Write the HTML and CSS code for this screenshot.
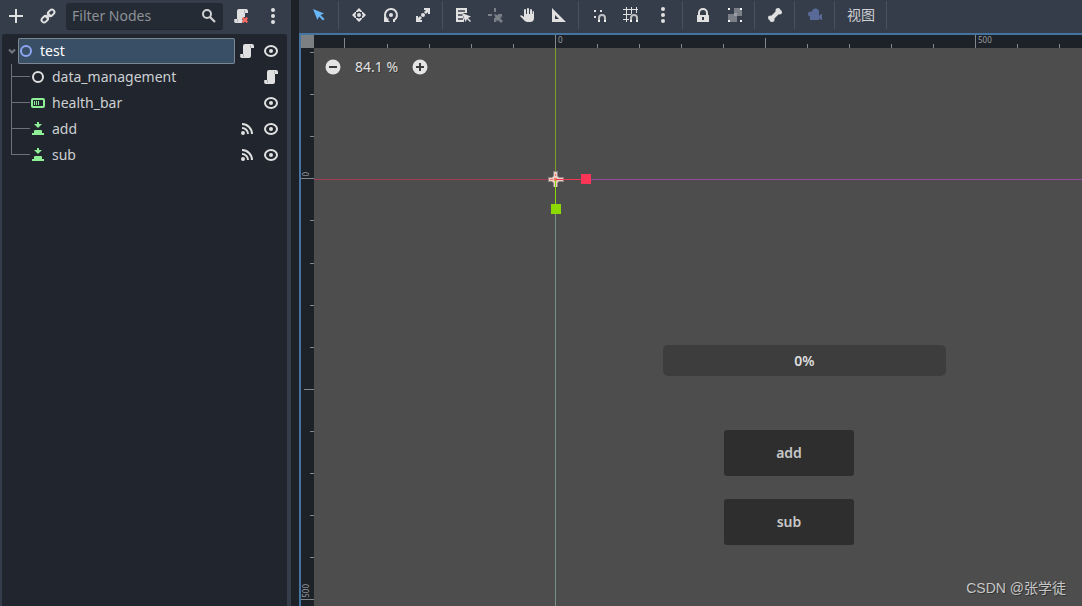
FILE: index.html
```
<!DOCTYPE html>
<html lang="en">
<head>
<meta charset="utf-8">
<title>Scene editor</title>
<link rel="stylesheet" href="styles.css">
</head>
<body>
<svg class="defs" aria-hidden="true">
  <symbol id="script" viewBox="0 0 16 16"><path fill="#e0e0e0" d="M6 1h7a2 2 0 0 1 2 2v2h-3v8a2 2 0 0 1-2 2H3a2 2 0 0 1-2-2v-2h3V3a2 2 0 0 1 2-2z"/><path fill="none" stroke="#b0b2b5" d="M11.500 2v3M1.500 11v2M4.500 11v3"/></symbol>
  <symbol id="eye" viewBox="0 0 16 16"><ellipse cx="8" cy="8" rx="6" ry="5" fill="none" stroke="#e0e0e0" stroke-width="2"/><circle cx="8" cy="8" r="2" fill="#e0e0e0"/></symbol>
  <symbol id="signal" viewBox="0 0 16 16"><circle cx="4" cy="12" r="2" fill="#e0e0e0"/><path d="M3 7a6 6 0 0 1 6 6M3 3a10 10 0 0 1 10 10" fill="none" stroke="#e0e0e0" stroke-width="2"/></symbol>
  <symbol id="dots" viewBox="0 0 16 16"><g fill="#e0e0e0"><circle cx="8" cy="2" r="2"/><circle cx="8" cy="8" r="2"/><circle cx="8" cy="14" r="2"/></g></symbol>
  <symbol id="press" viewBox="0 0 16 16"><path fill="#8eef97" d="M7 1h2v2h3L8 7 4 3h3zM5 9h6q1 0 1 1v2h2v2H2v-2h2v-2q0-1 1-1z"/></symbol>
</svg>
<div class="editor">
  <aside class="dock">
    <header class="dock-head">
      <button class="tool" aria-label="Add node"><svg class="icon" viewBox="0 0 16 16"><path d="M8 1v14M1 8h14" stroke="#e0e0e0" stroke-width="2"/></svg></button>
      <button class="tool" aria-label="Instance scene"><svg class="icon" viewBox="0 0 16 16"><g fill="none" stroke="#e0e0e0" stroke-width="2" transform="rotate(-45 8 8)"><rect x="0" y="5.500" width="7" height="5" rx="2.500"/><rect x="9" y="5.500" width="7" height="5" rx="2.500"/><path d="M5 8h6"/></g></svg></button>
      <label class="filter"><input type="text" placeholder="Filter Nodes" aria-label="Filter Nodes"><svg class="icon" viewBox="0 0 16 16"><circle cx="6" cy="6" r="4" fill="none" stroke="#d0d1d3" stroke-width="2"/><path d="m9 9 5 5" stroke="#d0d1d3" stroke-width="2.200"/></svg></label>
      <button class="tool" aria-label="Detach script"><svg class="icon" viewBox="0 0 16 16"><use href="#script"/><path d="M9 9h7v7H8v-5z" fill="#363d4a"/><path fill="#e0e0e0" d="M8 5h4v3l-3 3 1 2-1 2H8z"/><path d="m9.700 9.700 4.600 4.600m0-4.600-4.600 4.600" stroke="#ff6b62" stroke-width="2.200"/></svg></button>
      <button class="tool" aria-label="More options"><svg class="icon"><use href="#dots"/></svg></button>
    </header>
    <ul class="tree">
      <li class="row root">
        <svg class="arrow" viewBox="0 0 12 12"><path d="m3 4.500 3 3 3-3" fill="none" stroke="#747980" stroke-width="2"/></svg>
        <span class="name selected"><svg class="icon" viewBox="0 0 16 16"><circle cx="8" cy="8" r="5" fill="none" stroke="#8da5f3" stroke-width="2"/></svg>test</span>
        <button class="mini" aria-label="Script"><svg class="icon"><use href="#script"/></svg></button>
        <button class="mini" aria-label="Visible"><svg class="icon"><use href="#eye"/></svg></button>
      </li>
      <li class="row child">
        <span class="name"><svg class="icon" viewBox="0 0 16 16"><circle cx="8" cy="8" r="5" fill="none" stroke="#e0e0e0" stroke-width="2"/></svg>data_management</span>
        <button class="mini" aria-label="Script"><svg class="icon"><use href="#script"/></svg></button>
      </li>
      <li class="row child">
        <span class="name"><svg class="icon" viewBox="0 0 16 16"><rect x="2" y="4" width="12" height="8" rx="1" fill="none" stroke="#8eef97" stroke-width="2"/><path d="M4.500 6v4M6.500 6v4M8.500 6v4" stroke="#8eef97"/></svg>health_bar</span>
        <button class="mini" aria-label="Visible"><svg class="icon"><use href="#eye"/></svg></button>
      </li>
      <li class="row child">
        <span class="name"><svg class="icon"><use href="#press"/></svg>add</span>
        <button class="mini" aria-label="Signals"><svg class="icon"><use href="#signal"/></svg></button>
        <button class="mini" aria-label="Visible"><svg class="icon"><use href="#eye"/></svg></button>
      </li>
      <li class="row child">
        <span class="name"><svg class="icon"><use href="#press"/></svg>sub</span>
        <button class="mini" aria-label="Signals"><svg class="icon"><use href="#signal"/></svg></button>
        <button class="mini" aria-label="Visible"><svg class="icon"><use href="#eye"/></svg></button>
      </li>
    </ul>
  </aside>
  <main class="main">
    <nav class="toolbar">
      <button class="tool" aria-label="Select"><svg class="icon" viewBox="0 0 16 16"><path fill="#69b7fb" d="m2 2 4.500 11 1.500-3.500 4 4 1.500-1.500-4-4L13 6.500z"/></svg></button>
      <span class="sep"></span>
      <button class="tool" aria-label="Move"><svg class="icon" viewBox="0 0 16 16"><g fill="#e0e0e0"><circle cx="8" cy="8" r="2"/><path d="m8 1 3 3v1H9L8 4 7 5H5V4zM8 15l3-3v-1H9l-1 1-1-1H5v1zM1 8l3-3h1v2L4 8l1 1v2H4zM15 8l-3-3h-1v2l1 1-1 1v2h1z"/></g></svg></button>
      <button class="tool" aria-label="Rotate"><svg class="icon" viewBox="0 0 16 16"><path d="M4 12.500A6 6 0 1 1 11 13.200" fill="none" stroke="#e0e0e0" stroke-width="2"/><path fill="#e0e0e0" d="M1 9v6h6l-2-2 1-2-2 1zM10 12h2v3h-2z"/><circle cx="8" cy="8" r="2" fill="#e0e0e0"/></svg></button>
      <button class="tool" aria-label="Scale"><svg class="icon" viewBox="0 0 16 16"><g fill="#e0e0e0"><circle cx="8" cy="8" r="2"/><path d="M9 1h6v6h-2V5l-2 2-2-2 2-2H9zM1 9h2v2l2-2 2 2-2 2h2v2H1z"/></g></svg></button>
      <span class="sep"></span>
      <button class="tool" aria-label="List select"><svg class="icon" viewBox="0 0 16 16"><path fill="#e0e0e0" d="M1 1h11v5H9L7 7l2 5v3H1z"/><path d="M3 4h7M3 8h4M3 12h5" stroke="#363d4a" stroke-width="1.500"/><path fill="#e0e0e0" d="m7 6 9 3.500-3 1.500 3 3-1 1-3-3-1.500 3z"/></svg></button>
      <button class="tool" aria-label="Change pivot"><svg class="icon" viewBox="0 0 16 16"><path fill="#7b8088" d="M7 1h2v4H7zM1 7h4v2H1zM11 7h4v2h-4zM7 11h2v4H7zM7 7l9 3-3 1 3 3-2 2-3-3-1 2z"/></svg></button>
      <button class="tool" aria-label="Pan"><svg class="icon" viewBox="0 0 16 16"><path fill="#e0e0e0" d="M5 9V3q0-1 1-1t1 1v4h1V2q0-1 1-1t1 1v5h1V3q0-1 1-1t1 1v4h.500V5q0-1 .700-1T15 5v6q0 4-4 4H8q-2 0-4-3L1 9q1-2 4 1z"/></svg></button>
      <button class="tool" aria-label="Ruler"><svg class="icon" viewBox="0 0 16 16"><path fill="#e0e0e0" fill-rule="evenodd" d="M1 1v14h14zM4 8l4 4H4z"/></svg></button>
      <span class="sep"></span>
      <button class="tool" aria-label="Smart snap"><svg class="icon" viewBox="0 0 16 16"><path fill="#e0e0e0" d="M3 3h2v2H3zM9 3h2v2H9zM3 9h2v2H3z"/><path d="M8 15v-4a3 3 0 0 1 6 0v4" fill="none" stroke="#bfc1c4" stroke-width="2"/><path fill="#f4f4f4" d="M7 13h2v2H7zM13 13h2v2h-2z"/></svg></button>
      <button class="tool" aria-label="Grid snap"><svg class="icon" viewBox="0 0 16 16"><path d="M0 2.500h15M0 7.500h8M0 12.500h6M3.500 0v15M8.500 0v7M13.500 0v6" fill="none" stroke="#e0e0e0"/><path d="M8 15v-4a3 3 0 0 1 6 0v4" fill="none" stroke="#bfc1c4" stroke-width="2"/><path fill="#f4f4f4" d="M7 13h2v2H7zM13 13h2v2h-2z"/></svg></button>
      <button class="tool" aria-label="Snap options"><svg class="icon"><use href="#dots"/></svg></button>
      <span class="sep"></span>
      <button class="tool" aria-label="Lock"><svg class="icon" viewBox="0 0 16 16"><path d="M4 8V6a4 4 0 0 1 8 0v2" fill="none" stroke="#e0e0e0" stroke-width="2"/><path fill="#e0e0e0" fill-rule="evenodd" d="M2 8h12v7H2zM7 10v3h2v-3z"/></svg></button>
      <button class="tool" aria-label="Group"><svg class="icon" viewBox="0 0 16 16"><path fill="#7b8088" d="M7 1h6v2h2v6h-5v6H3v-2H1V7h6z"/><path fill="#9a9da3" d="M7 6h3v3H7z"/><path fill="#f4f4f4" d="M1 1h2v2H1zM13 1h2v2h-2zM1 13h2v2H1zM13 13h2v2h-2z"/></svg></button>
      <span class="sep"></span>
      <button class="tool" aria-label="Skeleton"><svg class="icon" viewBox="0 0 16 16"><g fill="#e0e0e0"><circle cx="11" cy="3.500" r="2.500"/><circle cx="12.700" cy="5.300" r="2.300"/><circle cx="3.300" cy="10.700" r="2.300"/><circle cx="5" cy="12.500" r="2.500"/></g><path d="m4 12 8-8" stroke="#e0e0e0" stroke-width="4"/></svg></button>
      <span class="sep"></span>
      <button class="tool" aria-label="Camera override"><svg class="icon" viewBox="0 0 16 16"><g fill="#5a6a98"><circle cx="8.500" cy="5" r="3.500"/><circle cx="3.500" cy="7" r="2.500"/><path d="M3 6h9v3l2-2h1v6h-1l-2-2v2H3z"/></g></svg></button>
      <span class="sep"></span>
      <button class="tool view">视图</button>
      <span class="sep"></span>
    </nav>
    <section class="workspace">
      <div class="corner"></div>
      <div class="ruler top">
        <svg class="ticks" aria-hidden="true"><path class="tick" d="M30.500 3v10M73.500 9v4M115.500 9v4M157.500 9v4M199.500 9v4M241.500 0v13M283.500 9v4M325.500 9v4M367.500 9v4M409.500 9v4M451.500 3v10M493.500 9v4M535.500 9v4M577.500 9v4M619.500 9v4M661.500 0v13M703.500 9v4M745.500 9v4"/></svg>
        <span class="mark x0">0</span><span class="mark x500">500</span>
      </div>
      <div class="ruler left">
        <svg class="ticks" aria-hidden="true"><path class="tick" d="M9 4.500h4M9 46.500h4M9 88.500h4M0 130.500h13M9 172.500h4M9 215.500h4M9 257.500h4M9 299.500h4M3 341.500h10M9 383.500h4M9 425.500h4M9 467.500h4M9 509.500h4M0 551.500h13"/></svg>
        <span class="mark y0">0</span><span class="mark y500">500</span>
      </div>
      <div class="canvas">
        <div class="zoom">
          <button class="round" aria-label="Zoom out"><svg class="icon" viewBox="0 0 16 16"><circle cx="8" cy="8" r="7.500" fill="#e4e4e4"/><path d="M4 8h8" stroke="#3c3c3c" stroke-width="2"/></svg></button>
          <span class="percent">84.1 %</span>
          <button class="round" aria-label="Zoom in"><svg class="icon" viewBox="0 0 16 16"><circle cx="8" cy="8" r="7.500" fill="#e4e4e4"/><path d="M4 8h8M8 4v8" stroke="#3c3c3c" stroke-width="2"/></svg></button>
        </div>
        <div class="axis-x"></div><div class="axis-y"></div>
        <svg class="gizmo" viewBox="0 0 48 48" aria-hidden="true"><path d="M6 0h5v5l1 1h5v5h-5l-1 1v4H6v-4l-1-1H1V6h4l1-1z" fill="#8d8481"/><path d="M7 1h3v4l2 2h4v3h-4l-2 2v4H7v-4l-2-2H2V7h3l2-2z" fill="#e9cfc5"/><path d="M8 3h1v2H8zM3 8h3v1H3zM11 8h3v1h-3zM8 12h1v2H8zM7 7h3v3H7z" fill="#ff7467"/><path d="M8.500 8.500H34" stroke="#f43653"/><path d="M8.500 8.500V34" stroke="#8bd705"/><path d="M34 3h10v10H34z" fill="#fb3556"/><path d="M4 33h10v10H4z" fill="#8bda03"/></svg>
        <div class="health" role="progressbar" aria-valuenow="0" aria-label="Health">0%</div>
        <button class="scene-button add">add</button>
        <button class="scene-button sub">sub</button>
        <span class="credit">CSDN @张学徒</span>
      </div>
    </section>
  </main>
</div>
</body>
</html>
```
FILE: styles.css
```
* { box-sizing: border-box; }
body {
  margin: 0;
  background: #1d2229;
  color: #cdcfd2;
  font: 14px/20px "Noto Sans", "Noto Sans CJK SC", sans-serif;
}
button { padding: 0; border: 0; background: none; color: inherit; font: inherit; }
.defs { position: absolute; width: 0; height: 0; }
.icon { display: block; flex: none; width: 16px; height: 16px; }
.editor { display: flex; gap: 8px; height: 100vh; overflow: hidden; }

.dock { display: flex; flex-direction: column; flex: none; width: 291px; padding: 0 4px 0 2px; background: #363d4a; }
.dock-head { display: flex; align-items: center; gap: 4px; height: 34px; padding-bottom: 2px; }
.tool { display: flex; align-items: center; justify-content: center; flex: none; width: 28px; height: 28px; }
.filter { display: flex; align-items: center; flex: 1; min-width: 0; height: 27px; padding: 0 6px; background: #252b34; border-bottom: 1px solid #20252d; border-radius: 3px; }
.filter input { flex: 1; min-width: 0; padding: 0; border: 0; outline: 0; background: none; color: #cdcfd2; font: inherit; }
.filter input::placeholder { color: #8d9197; opacity: 1; }

.tree { flex: 1; margin: 0; padding: 4px; list-style: none; background: #21262e; border-radius: 3px 3px 0 0; }
.row { display: flex; align-items: center; height: 26px; }
.arrow { flex: none; width: 12px; height: 12px; }
.name { display: flex; align-items: center; gap: 6px; flex: 1; height: 26px; }
.selected { border-radius: 2px; background: #384f66; box-shadow: inset 0 0 0 1px #7d8791; color: #fff; }
.mini { display: flex; justify-content: center; width: 24px; }
.child { padding-left: 24px; background: linear-gradient(#6c7077, #6c7077) 5px 12px / 19px 1px no-repeat, linear-gradient(#6c7077, #6c7077) 5px 0 / 1px 26px no-repeat; }
.child:last-child { background-size: 19px 1px, 1px 13px; }

.main { display: flex; flex-direction: column; flex: 1; min-width: 0; }
.toolbar { display: flex; align-items: center; gap: 4px; height: 33px; padding: 0 6px 3px; background: #363d4a; }
.sep { flex: none; width: 1px; height: 28px; margin: 0 2px 0 1px; background: #4a505c; }
.tool.view { width: 40px; }

.workspace { display: grid; grid-template: 13px 1fr / 13px 1fr; flex: 1; min-height: 0; border: solid #4674a0; border-width: 2px 0 0 2px; }
.corner { background: #7c8083; }
.ruler { position: relative; overflow: hidden; background: #1d2229; }
.ticks { display: block; width: 100%; height: 100%; }
.tick { fill: none; stroke: #83868a; }
.mark { position: absolute; color: #9a9c9f; font-size: 8px; line-height: 10px; }
.x0 { left: 244px; top: 0; }
.x500 { left: 664px; top: 0; }
.left .mark { left: 0; writing-mode: vertical-rl; transform: rotate(180deg); }
.y0 { top: 124px; }
.y500 { top: 536px; }

.canvas { position: relative; overflow: hidden; background: #4d4d4d; }
.zoom { display: flex; align-items: center; gap: 14px; padding: 9px 11px; color: #e0e0e0; text-shadow: 1px 1px #333; }
.axis-x, .axis-y { position: absolute; }
.axis-x { left: 0; right: 0; top: 131px; height: 1px; background: linear-gradient(90deg, #a33d57 241px, #97479c 241px); }
.axis-y { left: 241px; top: 0; bottom: 0; width: 1px; background: linear-gradient(#7c9f27 131px, #779184 131px); }
.gizmo { position: absolute; left: 233px; top: 123px; width: 48px; height: 48px; }
.health, .scene-button { position: absolute; display: flex; align-items: center; justify-content: center; font-weight: 600; }
.health { left: 349px; top: 297px; width: 283px; height: 31px; border-radius: 5px; background: #3d3d3d; color: #dedede; }
.scene-button { left: 410px; width: 130px; height: 46px; border-radius: 3px; background: #2e2e2e; color: #c8c8c8; }
.add { top: 382px; }
.sub { top: 451px; }
.credit { position: absolute; right: 16px; bottom: 8px; color: #c6c6c6; font-family: "Liberation Sans", "Noto Sans CJK SC", sans-serif; text-shadow: 1px 1px #333; }
```
